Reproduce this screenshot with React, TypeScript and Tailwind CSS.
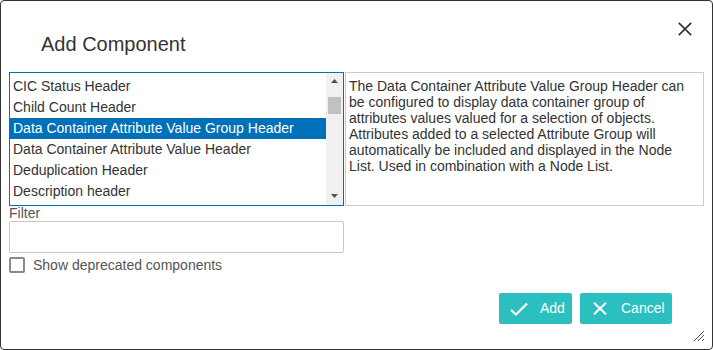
export default function App() {
  const items = [
    "CIC Status Header",
    "Child Count Header",
    "Data Container Attribute Value Group Header",
    "Data Container Attribute Value Header",
    "Deduplication Header",
    "Description header",
  ];
  return (
    <div className="w-[713px] h-[350px] bg-white border border-[#333] rounded-[4px] relative flex flex-col font-['Liberation_Sans',Arial,sans-serif] text-[#333] overflow-hidden">
      <div className="h-[71px] flex items-start justify-between shrink-0">
        <h1 className="pl-[40px] pt-[32px] text-[20px] leading-[23px] text-[#333]">Add Component</h1>
        <button className="mt-[21px] mr-[20px] w-[14px] h-[14px]">
          <svg width="14" height="14" viewBox="0 0 14 14">
            <path d="M0.8 0.8 L13.2 13.2 M13.2 0.8 L0.8 13.2" stroke="#333" strokeWidth="1.7" fill="none" />
          </svg>
        </button>
      </div>
      <div className="px-[8px] flex flex-col">
        <div className="flex gap-[1px]">
          <div className="w-[335px] h-[134px] border border-[#0070b8] flex">
            <div className="w-[316px] pt-[3px] flex flex-col">
              {items.map((it, i) => (
                <div
                  key={it}
                  className={
                    i === 2
                      ? "h-[21px] leading-[21px] px-[3px] text-[14px] bg-[#0070b8] text-white whitespace-nowrap"
                      : "h-[21px] leading-[21px] px-[3px] text-[14px] text-[#333] whitespace-nowrap"
                  }
                >
                  {it}
                </div>
              ))}
            </div>
            <div className="w-[17px] bg-[#f0f0f0] relative">
              <svg className="absolute left-[5px] top-[6px]" width="7" height="4" viewBox="0 0 7 4">
                <polygon points="0,4 3.5,0 7,4" fill="#505050" />
              </svg>
              <div className="absolute left-[2px] top-[24px] w-[13px] h-[17px] bg-[#c1c1c1]" />
              <svg className="absolute left-[5px] bottom-[7px]" width="7" height="4" viewBox="0 0 7 4">
                <polygon points="0,0 7,0 3.5,4" fill="#505050" />
              </svg>
            </div>
          </div>
          <div className="w-[360px] h-[134px] border border-[#cccccc] pl-[3px] pr-[3px] pt-[5px] text-[14px] leading-[16px] text-[#333]">
            The Data Container Attribute Value Group Header can be configured to display data container group of attributes values valued for a selection of objects. Attributes added to a selected Attribute Group will automatically be included and displayed in the Node List. Used in combination with a Node List.
          </div>
        </div>
        <label className="text-[14px] leading-[15px] text-[#555]">Filter</label>
        <div className="w-[335px] h-[32px] border border-[#c8c8c8] rounded-[2px]" />
        <div className="mt-[4px] flex items-center h-[16px]">
          <div className="w-[16px] h-[16px] border-2 border-[#8a8a8a] rounded-[2px]" />
          <span className="ml-[8px] text-[14px] leading-[16px] text-[#555]">Show deprecated components</span>
        </div>
      </div>
      <div className="mt-[20px] flex justify-end gap-[8px] pr-[40px]">
        <button className="w-[73px] h-[31px] bg-[#2bbfbf] rounded-[2px] text-white text-[14px] flex items-center">
          <svg className="ml-[11px]" width="18" height="14" viewBox="0 0 18 14">
            <path d="M1 8 L6 12.5 L17 1.5" stroke="white" strokeWidth="2.2" fill="none" />
          </svg>
          <span className="ml-[12px]">Add</span>
        </button>
        <button className="w-[92px] h-[31px] bg-[#2bbfbf] rounded-[2px] text-white text-[14px] flex items-center">
          <svg className="ml-[13px]" width="14" height="13" viewBox="0 0 14 13">
            <path d="M1 0.8 L13 12.2 M13 0.8 L1 12.2" stroke="white" strokeWidth="2" fill="none" />
          </svg>
          <span className="ml-[14px]">Cancel</span>
        </button>
      </div>
      <svg className="absolute right-[7px] bottom-[7px]" width="12" height="12" viewBox="0 0 12 12">
        <path d="M11 1 L1 11 M11 5 L5 11 M11 9 L9 11" stroke="#555" strokeWidth="1" fill="none" />
      </svg>
    </div>
  );
}
